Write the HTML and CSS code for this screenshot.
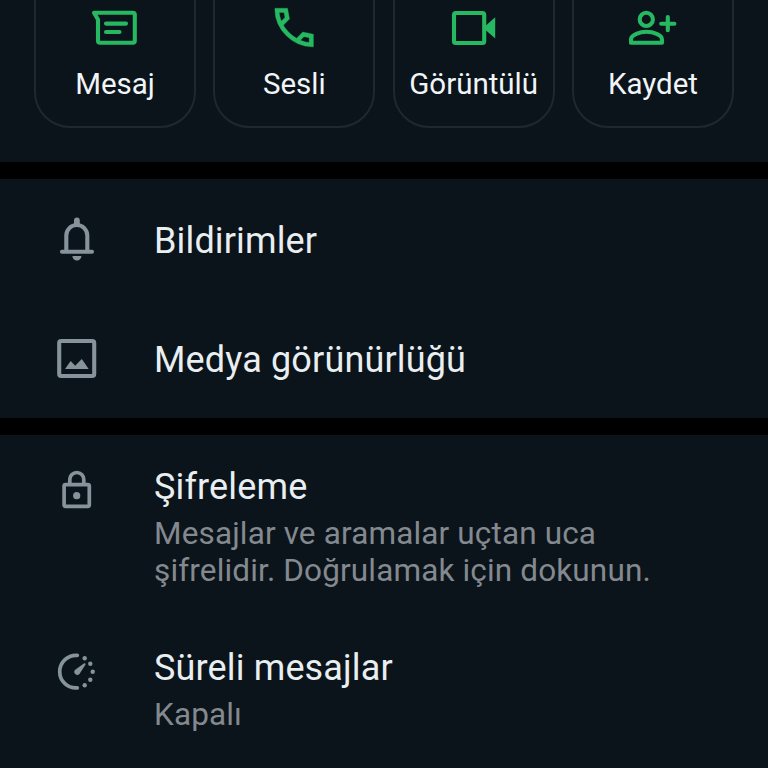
FILE: index.html
```
<!DOCTYPE html>
<html lang="tr">
<head>
<meta charset="utf-8">
<title>Kişi bilgisi</title>
<link rel="stylesheet" href="styles.css">
</head>
<body>
<main class="screen">
  <section class="actions">
    <button class="action">
      <svg class="icon" viewBox="91 2 48 48"><path d="M94 12.8H132.8a2 2 0 0 1 2 2V40.8a2 2 0 0 1-2 2H100a2 2 0 0 1-2-2V19.5ZM106 23.6H126M106 32H119.5"/></svg>
      <span>Mesaj</span>
    </button>
    <button class="action">
      <svg class="icon solid" viewBox="270.5 2 48 48"><path transform="translate(269 1.8) scale(2.14)" d="M19.95 21q-3.125 0-6.175-1.363t-5.55-3.862-3.862-5.55T3 4.05V3h5.9l.925 5.025-2.85 2.875q.55.975 1.225 1.85t1.45 1.625q.725.725 1.588 1.388T13.1 17l2.9-2.9 5 1.025V21zM6.025 9l1.65-1.65L7.25 5H5.025q.125 1.025.35 2.025T6.025 9m8.95 8.95q.975.425 1.988.675T19 18.95v-2.2l-2.35-.475z"/></svg>
      <span>Sesli</span>
    </button>
    <button class="action">
      <svg class="icon" viewBox="450 2 48 48"><rect x="454" y="13" width="30.2" height="30" rx="1.8"/><path class="fill" d="M485 26.2L495.2 17.3V38.5L485 29.6Z"/></svg>
      <span>Görüntülü</span>
    </button>
    <button class="action">
      <svg class="icon" viewBox="629 2 48 48"><circle cx="646.3" cy="19.4" r="6.6"/><path d="M631 42.8V39.5C631 34.5 640 31.8 646.5 31.8S662 34.5 662 39.5V42.8ZM661.2 23.7H674.4M667.8 17V30.2"/></svg>
      <span>Kaydet</span>
    </button>
  </section>

  <section class="group">
    <div class="row">
      <svg class="icon" viewBox="53 215 48 48"><path d="M62 251.7H92M66.3 251V235.5a10.5 10.5 0 0 1 21 0V251"/><path class="fill" d="M74 226V220.4a2.9 2.9 0 0 1 5.8 0V226ZM72.4 256H81.4a4.5 4.5 0 0 1-9 0Z"/></svg>
      <div class="title">Bildirimler</div>
    </div>
    <div class="row">
      <svg class="icon" viewBox="53 334 48 48"><rect x="59.2" y="341" width="35" height="35" rx="2"/><path class="fill" d="M65 369L70.7 361L75.2 365.8L81.8 359L88.7 369Z"/></svg>
      <div class="title">Medya görünürlüğü</div>
    </div>
  </section>

  <section class="group details">
    <div class="row encryption">
      <svg class="icon thin" viewBox="53 466 48 48"><rect x="64.1" y="484.6" width="25.2" height="21.7" rx="1.5"/><path d="M69.8 484V479.5a7 7 0 0 1 14 0V484"/><circle class="fill" cx="76.7" cy="495.7" r="3.6"/></svg>
      <div>
        <div class="title">Şifreleme</div>
        <div class="note">Mesajlar ve aramalar uçtan uca<br>şifrelidir. Doğrulamak için dokunun.</div>
      </div>
    </div>
    <div class="row">
      <svg class="icon thin" viewBox="53 647 48 48"><path d="M77.3 655.4a16.3 16.3 0 1 0 0 32.5"/><g class="fill"><circle cx="84.7" cy="658.3" r="2.2"/><circle cx="90.3" cy="663.7" r="2.2"/><circle cx="92.7" cy="671.7" r="2.2"/><circle cx="90.3" cy="679.7" r="2.2"/><circle cx="84.7" cy="685.3" r="2.2"/><path d="M75.2 669.8L84.2 663.2Q85.9 663 85.5 664.6L79.5 674a3 3 0 1 1-4.3-4.2Z"/></g></svg>
      <div>
        <div class="title">Süreli mesajlar</div>
        <div class="note">Kapalı</div>
      </div>
    </div>
  </section>
</main>
</body>
</html>
```
FILE: styles.css
```
* { box-sizing: border-box; }

body {
  margin: 0;
  background: #000;
  font-family: Roboto, sans-serif;
}

.screen {
  height: 768px;
  overflow: hidden;
  display: flex;
  flex-direction: column;
  gap: 17px;
}

.actions {
  height: 162px;
  flex: none;
  padding: 0 34px;
  display: grid;
  grid-template-columns: repeat(4, 162px);
  justify-content: space-between;
  background: #0b141a;
}

/* The cards run past the top edge of the scrolled screen. */
.action {
  height: 168px;
  margin: -40px 0 0;
  padding: 40px 0 0;
  display: flex;
  flex-direction: column;
  align-items: center;
  gap: 16px;
  border: 2px solid #20282e;
  border-radius: 36px;
  background: none;
  color: #f1f5f8;
  font: 29.5px/36px Roboto, sans-serif;
}

.icon {
  display: block;
  flex: none;
  width: 48px;
  height: 48px;
  fill: none;
  stroke: #86939a;
  stroke-width: 4.1;
  stroke-linecap: round;
  stroke-linejoin: round;
}

.icon .fill { fill: #86939a; stroke: none; }
.icon.thin { stroke-width: 3.7; }
.action .icon { stroke: #27b862; }
.action .icon .fill { fill: #27b862; }
.action .icon.solid { fill: #27b862; stroke: #27b862; stroke-width: 0.15; }

.group {
  height: 239px;
  flex: none;
  padding: 36px 0 0 53px;
  background: #0b141a;
}

.row {
  display: flex;
  gap: 53px;
  height: 119px;
}

.title {
  color: #e9eef1;
  font-size: 36px;
  line-height: 42px;
  letter-spacing: 0.15px;
  padding-top: 5px;
}

.details {
  height: 333px;
  padding-top: 31px;
}

.details .title { padding-top: 0; }
.encryption { height: 181px; }

.note {
  margin-top: 7px;
  color: #84898f;
  font-size: 31.5px;
  line-height: 37px;
  letter-spacing: 0.14px;
}
```
